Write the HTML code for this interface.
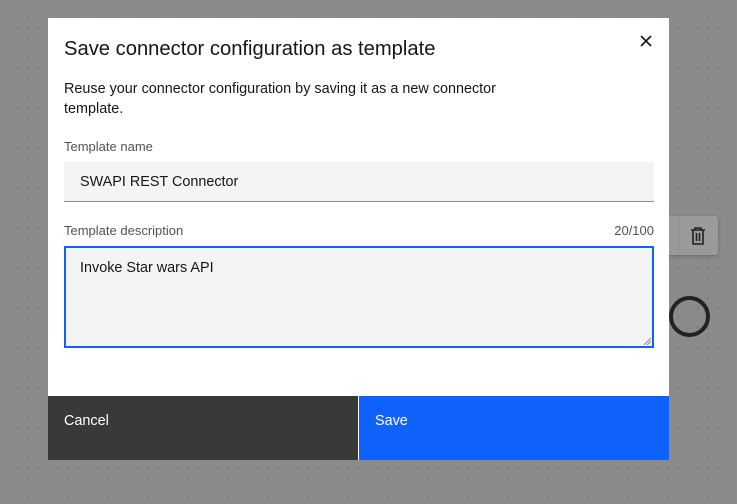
<!DOCTYPE html>
<html><head><style>
*{margin:0;padding:0;box-sizing:border-box}
body{width:737px;height:504px;overflow:hidden;background-color:#8b8b8b;background-image:radial-gradient(circle,#7c7c7c 1px,transparent 1.3px);background-size:10px 10px;background-position:3px 3px;font-family:"Liberation Sans",sans-serif;position:relative}
.card{position:absolute;left:660px;top:216px;width:58px;height:39px;background:#9a9a9a;border-radius:3px;box-shadow:0 1px 3px rgba(0,0,0,.25)}
.card .sep{position:absolute;left:18px;top:0;width:1px;height:39px;background:#8f8f8f}
.ring{position:absolute;left:669px;top:296px;width:41px;height:41px;border:4px solid #222;border-radius:50%}
.modal{position:absolute;left:48px;top:18px;width:621px;height:442px;background:#fff}
.t{position:absolute;color:#161616}
.inp{position:absolute;left:16px;top:144px;width:590px;height:40px;background:#f4f4f4;border-bottom:1px solid #8d8d8d;font-size:14.4px;padding:12px 16px;color:#161616}
.ta{position:absolute;left:16px;top:228px;width:590px;height:102px;background:#f4f4f4;border:2px solid #0f62fe;font-size:14.4px;padding:12px 14px;color:#161616}
.btn{position:absolute;top:378px;height:64px;font-size:14.4px;padding:17px 16px;color:#fff}
</style></head><body>
<div class="card"><div class="sep"></div>
<svg style="position:absolute;left:30px;top:11px" width="16" height="18" viewBox="0 0 16 18" fill="none" stroke="#222" stroke-width="1.6"><path d="M1 3h14M5 3V1h6v2M3 3v14h10V3M6.5 6v8M9.5 6v8"/></svg></div>
<div class="ring"></div>
<div class="modal">
<div class="t" style="left:16px;top:20px;font-size:20.2px">Save connector configuration as template</div>
<svg style="position:absolute;left:592px;top:17px" width="12" height="12" viewBox="0 0 12 12" stroke="#161616" stroke-width="1.6"><path d="M1 1l10 10M11 1L1 11"/></svg>
<div class="t" style="left:16px;top:61px;font-size:14.4px;line-height:20px;width:460px">Reuse your connector configuration by saving it as a new connector template.</div>
<div class="t" style="left:16px;top:121px;font-size:13px;color:#525252">Template name</div>
<div class="inp">SWAPI REST Connector</div>
<div class="t" style="left:16px;top:205px;font-size:13px;color:#525252">Template description</div>
<div class="t" style="right:15px;top:205px;font-size:13px;color:#525252">20/100</div>
<div class="ta">Invoke Star wars API
<svg style="position:absolute;right:1px;bottom:1px" width="7" height="7" stroke="#8d8d8d"><path d="M0 7L7 0M3 7L7 3"/></svg></div>
<div class="btn" style="left:0;width:310px;background:#393939">Cancel</div>
<div class="btn" style="left:311px;width:310px;background:#0f62fe">Save</div>
</div>
</body></html>
